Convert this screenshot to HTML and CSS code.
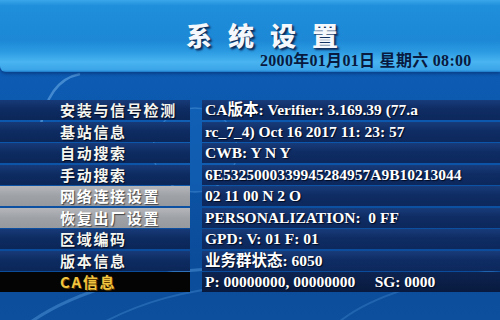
FILE: index.html
```html
<!DOCTYPE html>
<html>
<head>
<meta charset="utf-8">
<link rel="stylesheet" href="styles.css">
</head>
<body>
<div class="screen">
  <svg class="deco" width="500" height="320" viewBox="0 0 500 320">
    <path d="M40 130 C45 95 60 78 80 74" fill="none" stroke="#6fb0ea" stroke-width="2.5" opacity="0.55"/>
    <circle cx="195" cy="150" r="42" fill="#1a6cc4" opacity="0.35"/>
    <circle cx="195" cy="150" r="42" fill="none" stroke="#5aa0e0" stroke-width="1.5" opacity="0.4"/>
    <path d="M20 330 C70 290 150 270 230 268" fill="none" stroke="#4e96da" stroke-width="3" opacity="0.5"/>
    <path d="M90 330 C140 300 190 290 240 285" fill="none" stroke="#4e96da" stroke-width="2" opacity="0.35"/>
    <path d="M330 330 C360 300 420 280 500 270" fill="none" stroke="#4e96da" stroke-width="2" opacity="0.3"/>
  </svg>
  <header class="top">
    <div class="title">系统设置</div>
    <div class="date">2000年01月01日 星期六 08:00</div>
  </header>
  <main class="menu">
    <div class="item">安装与信号检测</div><div class="info">CA版本: Verifier: 3.169.39 (77.a</div>
    <div class="item">基站信息</div><div class="info">rc_7_4) Oct 16 2017 11: 23: 57</div>
    <div class="item">自动搜索</div><div class="info">CWB: Y N Y</div>
    <div class="item">手动搜索</div><div class="info">6E5325000339945284957A9B10213044</div>
    <div class="item gray">网络连接设置</div><div class="info">02 11 00 N 2 O</div>
    <div class="item gray">恢复出厂设置</div><div class="info">PERSONALIZATION:&nbsp; 0 FF</div>
    <div class="item">区域编码</div><div class="info">GPD: V: 01 F: 01</div>
    <div class="item">版本信息</div><div class="info">业务群状态: 6050</div>
    <div class="item active">CA信息</div><div class="info dark">P: 00000000, 00000000&nbsp;&nbsp;&nbsp;&nbsp; SG: 0000</div>
  </main>
</div>
</body>
</html>
```
FILE: styles.css
```css
html, body {
  margin: 0;
  padding: 0;
}
body {
  width: 500px;
  height: 320px;
  overflow: hidden;
  background: #0c55a8;
}
.screen {
  position: relative;
  width: 500px;
  height: 320px;
  background: linear-gradient(to bottom, #0d5fba 0px, #0c58ae 120px, #0b4c9a 260px, #0d4f9c 320px);
  font-family: "Liberation Serif", "Noto Sans CJK SC", serif;
}
.deco {
  position: absolute;
  left: 0;
  top: 0;
}
.top {
  position: relative;
  height: 72px;
  background: linear-gradient(to bottom, #3aa6ea 0px, #1f8edb 6px, #1c88d6 40px, #2c9be2 52px, #49b4f0 62px, #3aa4e8 70px, #1b78c8 72px);
  border-bottom-left-radius: 6px;
  box-shadow: 0 2px 3px rgba(5, 40, 100, 0.5);
  display: flex;
  flex-direction: column;
}
.title {
  padding-left: 186px;
  padding-top: 18px;
  height: 34px;
  font-family: "Noto Sans CJK SC", sans-serif;
  font-weight: 900;
  font-size: 26px;
  line-height: 34px;
  letter-spacing: 16px;
  color: #f4f8fc;
  text-shadow: 2px 2px 2px #0a2c5c, 1px 1px 0 #3a5a80;
}
.date {
  padding-left: 260px;
  font-weight: bold;
  font-size: 16px;
  line-height: 18px;
  color: #081a40;
  letter-spacing: 0.3px;
}
.menu {
  position: relative;
  margin-top: 28px;
  display: grid;
  grid-template-columns: 190px 1fr;
  column-gap: 12px;
  row-gap: 1.5px;
  grid-auto-rows: 20px;
}
.item {
  padding-left: 60px;
  height: 20px;
  overflow: hidden;
  font-family: "Noto Sans CJK SC", sans-serif;
  font-weight: bold;
  font-size: 15px;
  line-height: 20px;
  letter-spacing: 1.7px;
  color: #f6f6f0;
  background: linear-gradient(to bottom, #173a78 0%, #0e2c62 45%, #0b2658 100%);
  text-shadow: 1px 1px 1px #000a20;
}
.item.gray {
  background: linear-gradient(to bottom, #b4b6ba 0%, #9ea1a6 50%, #96999e 100%);
  color: #ffffff;
  text-shadow: 1px 1px 1px #404448;
}
.item.active {
  background: #040404;
  color: #f2c440;
  text-shadow: 1px 1px 0 #5a3a00;
}
.info {
  padding-left: 3px;
  height: 20px;
  font-weight: bold;
  font-size: 15.5px;
  line-height: 20px;
  color: #ffffff;
  white-space: nowrap;
  overflow: hidden;
  background: linear-gradient(to bottom, #183c7a 0%, #0f2c64 45%, #0c285c 100%);
  text-shadow: 1px 1px 1px #000a20;
}
.info.dark {
  background: linear-gradient(to bottom, #0d2450 0%, #081a3e 100%);
}
```
